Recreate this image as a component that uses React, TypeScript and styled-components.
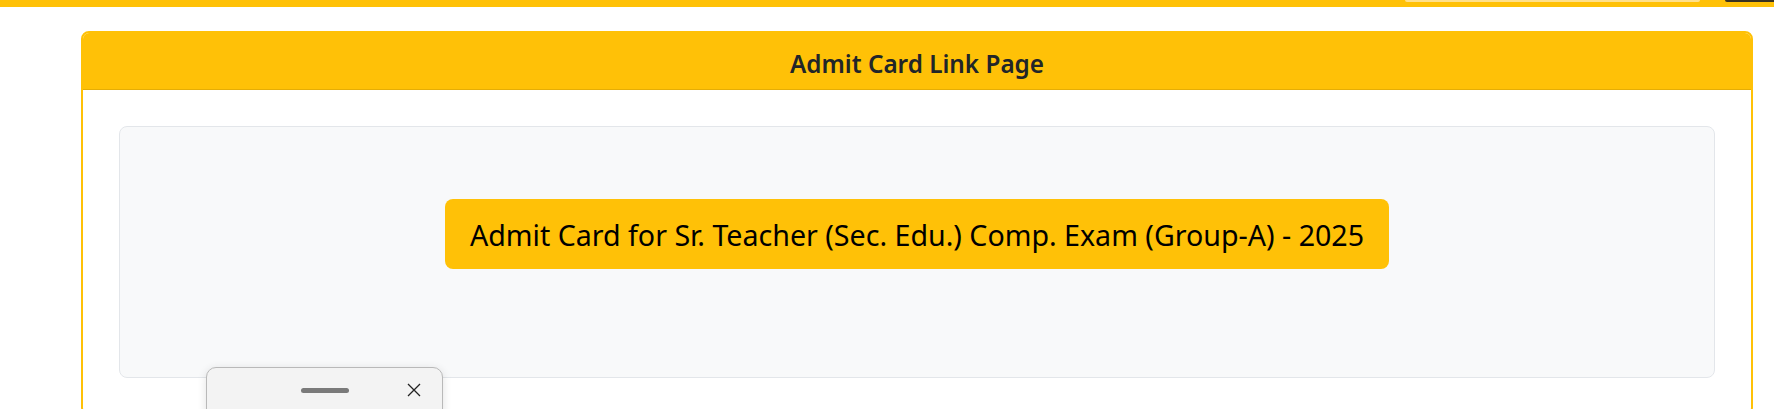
import React from "react";
import styled, { createGlobalStyle } from "styled-components";

const GlobalStyle = createGlobalStyle`
  html, body {
    margin: 0;
    padding: 0;
    background: #ffffff;
    overflow: hidden;
    font-family: "Noto Sans", "Open Sans", Arial, sans-serif;
  }
  * { box-sizing: border-box; }
`;

const TopBar = styled.div`
  height: 7px;
  background: #ffc107;
  display: flex;
  justify-content: flex-end;
  align-items: flex-start;
  gap: 25px;
`;

const TopInput = styled.div`
  width: 295px;
  height: 2px;
  background: #ffe08a;
  border-radius: 0 0 4px 4px;
`;

const TopDark = styled.div`
  width: 49px;
  height: 2px;
  background: #3a3320;
  border-radius: 0 0 0 3px;
`;

const Card = styled.section`
  margin: 24px 21px 0 81px;
  border: 2px solid #ffc107;
  border-radius: 8px;
  overflow: hidden;
  background: #fff;
`;

const CardHeader = styled.header`
  height: 57px;
  padding-top: 4px;
  background: #ffc107;
  border-bottom: 1px solid rgba(0, 0, 0, 0.1);
  display: flex;
  align-items: center;
  justify-content: center;
`;

const Title = styled.h5`
  margin: 0;
  font-size: 24.3px;
  font-weight: 600;
  color: #212529;
`;

const CardBody = styled.div`
  padding: 36px 36px 36px;
`;

const LinkBox = styled.div`
  background: #f8f9fa;
  border: 1px solid #e3e6ea;
  border-radius: 8px;
  padding: 72px 0 108px;
  display: flex;
  justify-content: center;
`;

const LinkButton = styled.a`
  display: inline-flex;
  align-items: center;
  height: 70px;
  padding: 0 25px;
  background: #ffc107;
  border-radius: 8px;
  color: #000;
  font-size: 28.6px;
  font-weight: 400;
  text-decoration: none;
  white-space: nowrap;
`;

const Widget = styled.div`
  position: absolute;
  left: 206px;
  top: 367px;
  width: 237px;
  height: 80px;
  background: #f3f3f3;
  border: 1px solid #b9b9b9;
  border-radius: 10px;
  box-shadow: 0 2px 10px rgba(0, 0, 0, 0.12);
`;

const WidgetBar = styled.div`
  display: grid;
  grid-template-columns: 1fr 48px 1fr;
  align-items: center;
  height: 44px;
`;

const Handle = styled.div`
  grid-column: 2;
  height: 5px;
  border-radius: 3px;
  background: #7a7a7a;
`;

const CloseIcon = styled.svg`
  grid-column: 3;
  justify-self: end;
  margin-right: 21px;
  width: 14px;
  height: 14px;
`;

export default function App() {
  return (
    <>
      <GlobalStyle />
      <TopBar>
        <TopInput />
        <TopDark />
      </TopBar>
      <Card>
        <CardHeader>
          <Title>Admit Card Link Page</Title>
        </CardHeader>
        <CardBody>
          <LinkBox>
            <LinkButton href="#">
              Admit Card for Sr. Teacher (Sec. Edu.) Comp. Exam (Group-A) - 2025
            </LinkButton>
          </LinkBox>
        </CardBody>
      </Card>
      <Widget>
        <WidgetBar>
          <Handle />
          <CloseIcon viewBox="0 0 14 14">
            <path d="M1 1 L13 13 M13 1 L1 13" stroke="#222" strokeWidth="1.3" fill="none" />
          </CloseIcon>
        </WidgetBar>
      </Widget>
    </>
  );
}
